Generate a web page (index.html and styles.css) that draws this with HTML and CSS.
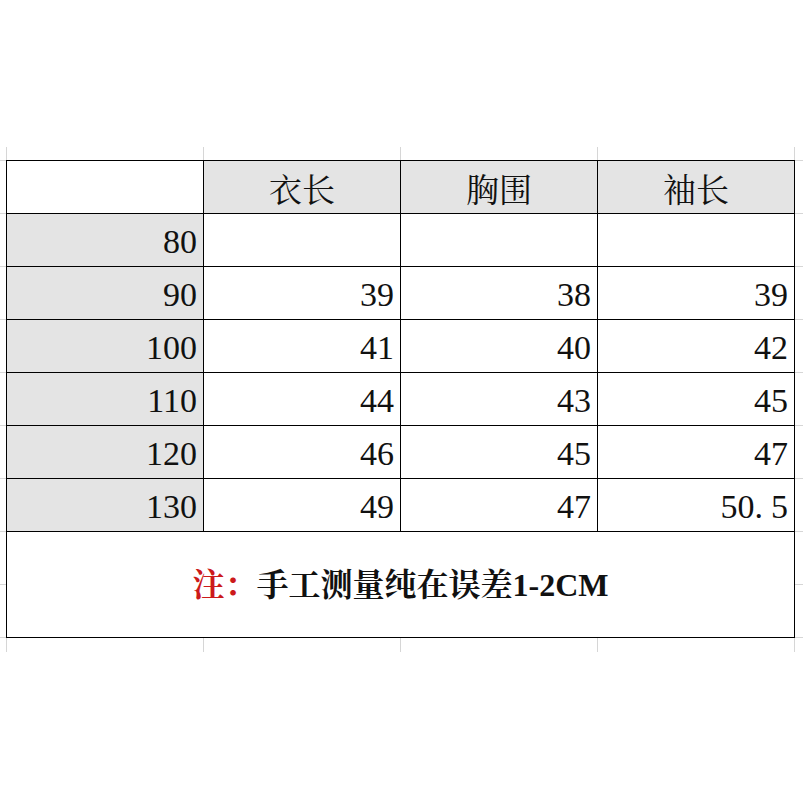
FILE: index.html
```html
<!DOCTYPE html>
<html lang="zh-CN">
<head>
<meta charset="utf-8">
<title>尺码表</title>
<link rel="stylesheet" href="styles.css">
</head>
<body>
<div class="sheet">
  <table class="size-table">
    <colgroup>
      <col class="col"><col class="col"><col class="col"><col class="col">
    </colgroup>
    <tr class="row">
      <td class="blank"></td>
      <th class="head">衣长</th>
      <th class="head">胸围</th>
      <th class="head">袖长</th>
    </tr>
    <tr class="row">
      <td class="size">80</td>
      <td class="num"></td>
      <td class="num"></td>
      <td class="num"></td>
    </tr>
    <tr class="row">
      <td class="size">90</td>
      <td class="num">39</td>
      <td class="num">38</td>
      <td class="num">39</td>
    </tr>
    <tr class="row">
      <td class="size">100</td>
      <td class="num">41</td>
      <td class="num">40</td>
      <td class="num">42</td>
    </tr>
    <tr class="row">
      <td class="size">110</td>
      <td class="num">44</td>
      <td class="num">43</td>
      <td class="num">45</td>
    </tr>
    <tr class="row">
      <td class="size">120</td>
      <td class="num">46</td>
      <td class="num">45</td>
      <td class="num">47</td>
    </tr>
    <tr class="row">
      <td class="size">130</td>
      <td class="num">49</td>
      <td class="num">47</td>
      <td class="num">50<span class="dot">.</span>5</td>
    </tr>
    <tr class="note-row">
      <td class="note" colspan="4"><span class="note-label">注：</span>手工测量纯在误差1-2CM</td>
    </tr>
  </table>
</div>
</body>
</html>
```

FILE: styles.css
```css
html, body {
  margin: 0;
  padding: 0;
  background: #ffffff;
}

body {
  width: 803px;
  height: 803px;
  overflow: hidden;
  padding-top: 147px;
  box-sizing: border-box;
}

.sheet {
  width: 803px;
  height: 505px;
  overflow: hidden;
  padding: 13px 0 0 6px;
  box-sizing: border-box;
  background-color: #ffffff;
  background-image:
    repeating-linear-gradient(to right, #d6d6d6 0, #d6d6d6 1px, transparent 1px, transparent 197px),
    repeating-linear-gradient(to bottom, #d6d6d6 0, #d6d6d6 1px, transparent 1px, transparent 53px);
  background-position: 6px 0, 0 13px;
}

.size-table {
  border-collapse: collapse;
  table-layout: fixed;
  width: 789px;
  background: #ffffff;
}

.col {
  width: 197px;
}

.size-table td,
.size-table th {
  border: 1px solid #000000;
  padding: 0;
  box-sizing: border-box;
}

.row {
  height: 53px;
}

.note-row {
  height: 106px;
}

.head {
  background: #e4e4e4;
  font-family: "Noto Serif CJK SC", "Noto Sans CJK SC", sans-serif;
  font-weight: 400;
  font-size: 33px;
  line-height: 1;
  color: #111111;
  text-align: center;
  vertical-align: middle;
  padding-top: 2px;
}

.blank {
  background: #ffffff;
}

.size,
.num {
  font-family: "Liberation Serif", serif;
  font-size: 34px;
  line-height: 1;
  color: #111111;
  text-align: right;
  vertical-align: bottom;
  padding-right: 6px !important;
  padding-bottom: 7px !important;
}

.size {
  background: #e4e4e4;
}

.num {
  background: #ffffff;
}

.dot {
  padding-right: 8px;
}

.note {
  background: #ffffff;
  text-align: center;
  vertical-align: middle;
  font-family: "Liberation Serif", "Noto Serif CJK SC", "Noto Sans CJK SC", serif;
  font-weight: 700;
  font-size: 32px;
  line-height: 1;
  color: #111111;
}

.note-label {
  color: #cc1a1a;
}
```
